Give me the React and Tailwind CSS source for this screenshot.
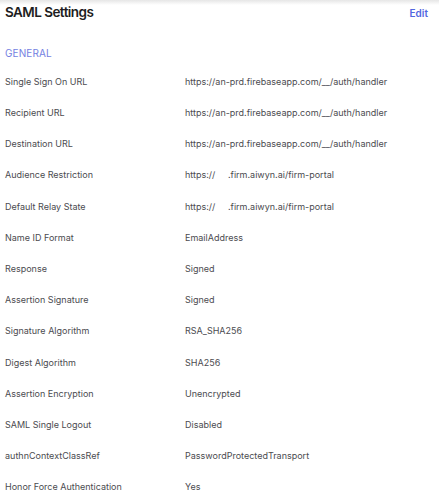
export default function App() {
  const rows = [
    ["Single Sign On URL", "https://an-prd.firebaseapp.com/__/auth/handler"],
    ["Recipient URL", "https://an-prd.firebaseapp.com/__/auth/handler"],
    ["Destination URL", "https://an-prd.firebaseapp.com/__/auth/handler"],
    ["Audience Restriction", "https://\u00a0\u00a0\u00a0\u00a0\u00a0.firm.aiwyn.ai/firm-portal"],
    ["Default Relay State", "https://\u00a0\u00a0\u00a0\u00a0\u00a0.firm.aiwyn.ai/firm-portal"],
    ["Name ID Format", "EmailAddress"],
    ["Response", "Signed"],
    ["Assertion Signature", "Signed"],
    ["Signature Algorithm", "RSA_SHA256"],
    ["Digest Algorithm", "SHA256"],
    ["Assertion Encryption", "Unencrypted"],
    ["SAML Single Logout", "Disabled"],
    ["authnContextClassRef", "PasswordProtectedTransport"],
    ["Honor Force Authentication", "Yes"],
  ];

  return (
    <div className="w-[439px] h-[499px] overflow-hidden bg-white font-['Inter',sans-serif] relative">
      <div className="absolute top-0 left-0 right-0 h-[5px] bg-gradient-to-b from-[#e6e6e6] to-white" />
      <div className="flex items-start justify-between px-[5px] pt-[2px]">
        <h2 className="text-[13.5px] font-semibold text-[#1d1d21] tracking-[-0.55px] leading-[20px]">SAML Settings</h2>
        <button className="text-[10px] font-semibold text-[#5266e0] mt-[4px] mr-[6px]">Edit</button>
      </div>
      <div className="px-[5px] mt-[24px] text-[10px] text-[#747fe2] leading-[14px] tracking-[0.1px]">GENERAL</div>
      <div className="mt-[6px]">
        {rows.map(([label, value]) => (
          <div key={label} className="flex items-center h-[31.2px] text-[9px] text-[#4b4b4f] px-[5px]">
            <div className="w-[180px] shrink-0">{label}</div>
            <div>{value}</div>
          </div>
        ))}
      </div>
    </div>
  );
}
